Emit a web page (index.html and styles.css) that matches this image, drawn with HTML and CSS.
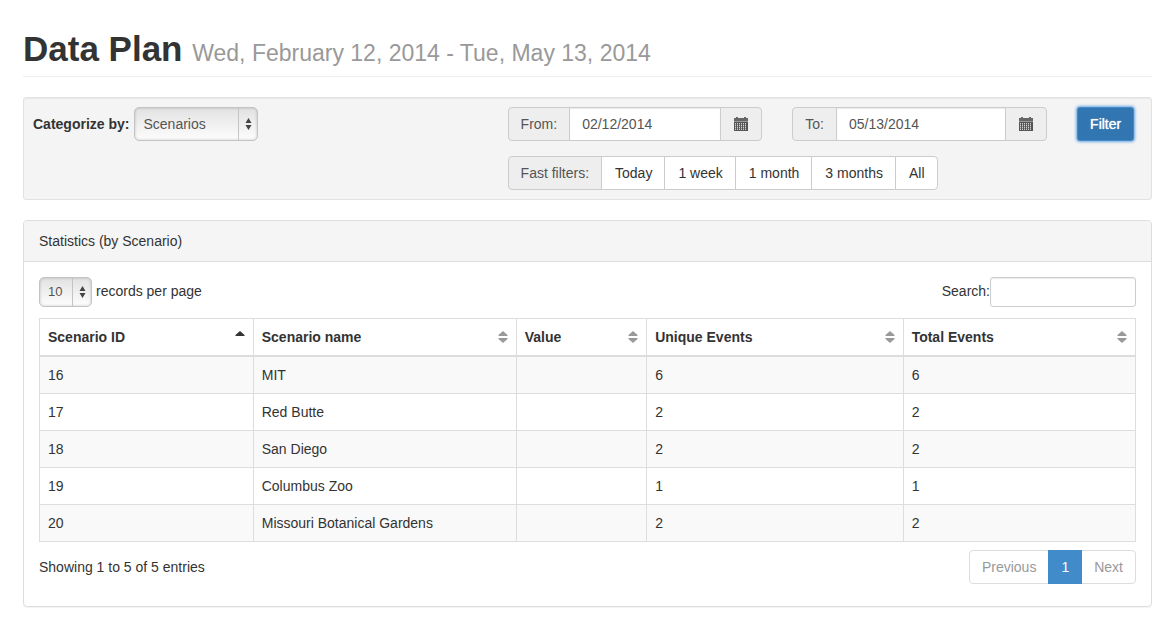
FILE: index.html
```html
<!DOCTYPE html>
<html lang="en">
<head>
<meta charset="utf-8">
<meta name="viewport" content="width=device-width, initial-scale=1">
<title>Data Plan</title>
<link rel="stylesheet" href="styles.css">
</head>
<body>
<svg class="sprite" aria-hidden="true">
  <symbol id="calendar" viewBox="0 0 16 16">
    <path d="M1 2h2V1h2v1h6V1h2v1h2v3H1z" fill="#666"/>
    <path d="M1 5h14v1H1z" fill="#999"/>
    <path d="M1 6h14v9H1z" fill="#555"/>
    <path d="M2 7.500h12M2 9.500h12M2 11.500h12M2 13.500h12" stroke="#eee" stroke-width="1" stroke-dasharray="1 1" opacity=".8"/>
    <path d="M2 8.500h12M2 10.500h12M2 12.500h12" stroke="#eee" stroke-width="1" stroke-dasharray="1 1" opacity=".35"/>
  </symbol>
  <symbol id="updown" viewBox="0 0 7 12">
    <path d="M3.500 0L6.500 5h-6zM3.500 12L.5 7h6z" fill="#444"/>
  </symbol>
  <symbol id="sort" viewBox="0 0 10 12">
    <path d="M5 0l4.500 4v1h-9V4zM5 12L.5 8V7h9v1z" fill="#999"/>
  </symbol>
  <symbol id="sort-asc" viewBox="0 0 10 12">
    <path d="M5 0l4.500 4v1h-9V4z" fill="#333"/>
  </symbol>
</svg>
<main class="page">
  <header class="page-header">
    <h1>Data Plan <small>Wed, February 12, 2014 - Tue, May 13, 2014</small></h1>
  </header>

  <form class="well">
    <div class="categorize">
      <label for="category">Categorize by:</label>
      <span class="select select-lg">
        <select id="category"><option>Scenarios</option></select>
        <svg class="select-arrows"><use href="#updown"/></svg>
      </span>
    </div>
    <div class="input-group from">
      <label class="addon" for="from">From:</label>
      <input type="text" id="from" value="02/12/2014">
      <span class="addon"><svg class="icon"><use href="#calendar"/></svg></span>
    </div>
    <div class="input-group to">
      <label class="addon" for="to">To:</label>
      <input type="text" id="to" value="05/13/2014">
      <span class="addon"><svg class="icon"><use href="#calendar"/></svg></span>
    </div>
    <button type="button" class="filter">Filter</button>
    <div class="input-group fast">
      <span class="addon">Fast filters:</span>
      <button type="button">Today</button>
      <button type="button">1 week</button>
      <button type="button">1 month</button>
      <button type="button">3 months</button>
      <button type="button">All</button>
    </div>
  </form>

  <section class="panel">
    <h2 class="panel-heading">Statistics (by Scenario)</h2>
    <div class="panel-body">
      <div class="toolbar">
        <div class="length">
          <span class="select select-sm">
            <select id="length"><option>10</option></select>
            <svg class="select-arrows"><use href="#updown"/></svg>
          </span>
          <label for="length">records per page</label>
        </div>
        <div class="search">
          <label for="search">Search:</label>
          <input type="text" id="search">
        </div>
      </div>
      <table class="table">
        <colgroup>
          <col class="col-id"><col class="col-name"><col class="col-value"><col class="col-unique"><col class="col-total">
        </colgroup>
        <thead>
          <tr>
            <th><div class="th">Scenario ID<svg class="sort"><use href="#sort-asc"/></svg></div></th>
            <th><div class="th">Scenario name<svg class="sort"><use href="#sort"/></svg></div></th>
            <th><div class="th">Value<svg class="sort"><use href="#sort"/></svg></div></th>
            <th><div class="th">Unique Events<svg class="sort"><use href="#sort"/></svg></div></th>
            <th><div class="th">Total Events<svg class="sort"><use href="#sort"/></svg></div></th>
          </tr>
        </thead>
        <tbody>
          <tr><td>16</td><td>MIT</td><td></td><td>6</td><td>6</td></tr>
          <tr><td>17</td><td>Red Butte</td><td></td><td>2</td><td>2</td></tr>
          <tr><td>18</td><td>San Diego</td><td></td><td>2</td><td>2</td></tr>
          <tr><td>19</td><td>Columbus Zoo</td><td></td><td>1</td><td>1</td></tr>
          <tr><td>20</td><td>Missouri Botanical Gardens</td><td></td><td>2</td><td>2</td></tr>
        </tbody>
      </table>
      <div class="table-footer">
        <p>Showing 1 to 5 of 5 entries</p>
        <nav class="pagination" aria-label="Pages">
          <button type="button" disabled>Previous</button>
          <button type="button" class="active">1</button>
          <button type="button" disabled>Next</button>
        </nav>
      </div>
    </div>
  </section>
</main>
</body>
</html>
```
FILE: styles.css
```css
* { box-sizing: border-box; }

body {
  margin: 0;
  background: #fff;
  color: #333;
  font: 14px/20px "Liberation Sans", Arial, sans-serif;
}

input, select, button { font: inherit; margin: 0; }

.sprite { display: none; }

.page { padding: 29px 22px 20px 23px; }

.page-header {
  padding-bottom: 7px;
  margin-bottom: 20px;
  border-bottom: 1px solid #eee;
}

h1 {
  margin: 0;
  font-size: 35px;
  line-height: 40px;
  font-weight: bold;
}

h1 small {
  font-size: 23px;
  line-height: 24px;
  font-weight: normal;
  color: #999;
}

.well {
  display: grid;
  grid-template-columns: repeat(12, minmax(0, 1fr));
  gap: 15px 30px;
  padding: 9px;
  margin-bottom: 20px;
  background: #f4f4f4;
  border: 1px solid #e2e2e2;
  border-radius: 3px;
  box-shadow: inset 0 1px 1px rgba(0, 0, 0, .05);
}

.categorize {
  grid-column: span 5;
  display: flex;
  align-items: center;
  gap: 5px;
  font-weight: bold;
}

.from, .to { grid-column: span 3; }
.fast { grid-column: 6 / -1; }

.select {
  display: inline-flex;
  position: relative;
  font-weight: normal;
}

.select select {
  appearance: none;
  width: 100%;
  border: 1px solid #c4c4c4;
  border-radius: 5px;
  background: linear-gradient(#e2e2e2, #fdfdfd);
  box-shadow: inset 0 0 3px rgba(0, 0, 0, .2);
  color: #555;
}

.select-lg { width: 124px; height: 34px; }
.select-lg select { padding: 0 8px; }
.select-sm { width: 53px; height: 30px; }
.select-sm select { padding: 0 8px; font-size: 13px; }

.select-arrows {
  position: absolute;
  top: 1px;
  right: 1px;
  width: 19px;
  height: calc(100% - 2px);
  padding: 10px 5px 10px 6px;
  border-left: 1px solid #c4c4c4;
  pointer-events: none;
}

.select-sm .select-arrows { padding: 8px 5px 8px 6px; }

.input-group { display: flex; height: 34px; }

.input-group > * {
  border: 1px solid #ccc;
  border-radius: 0;
}

.input-group > * + * { margin-left: -1px; }

.input-group > :first-child { border-radius: 4px 0 0 4px; }
.input-group > :last-child { border-radius: 0 4px 4px 0; }

.input-group input {
  flex: 1;
  min-width: 0;
  padding: 0 12px;
  background: #fff;
  color: #555;
  box-shadow: inset 0 1px 1px rgba(0, 0, 0, .08);
}

.input-group button {
  padding: 0 12px 0 13px;
  background: #fff;
  color: #333;
}

.addon {
  display: flex;
  align-items: center;
  padding: 0 12px;
  background: #eee;
  color: #555;
}

.icon { width: 16px; height: 16px; }

.filter {
  justify-self: start;
  height: 34px;
  padding: 0 12px;
  border: 1px solid #428bca;
  border-radius: 3px;
  background: #3276b1;
  color: #fff;
  box-shadow: 0 0 3px 1px #6fa8e0;
  text-shadow: 0 0 1px #fff;
}

.panel {
  border: 1px solid #ddd;
  border-radius: 4px;
  box-shadow: 0 1px 1px rgba(0, 0, 0, .05);
}

.panel-heading {
  margin: 0;
  padding: 10px 15px;
  border-bottom: 1px solid #ddd;
  border-radius: 3px 3px 0 0;
  background: #f5f5f5;
  font-size: 14px;
  font-weight: normal;
}

.panel-body { padding: 15px 15px 22px; }

.toolbar, .table-footer {
  display: flex;
  justify-content: space-between;
}

.toolbar { margin-bottom: 11px; }

.length, .search {
  display: flex;
  line-height: 28px;
}

.length { gap: 4px; }

.search input {
  width: 146px;
  height: 30px;
  padding: 0 10px;
  border: 1px solid #ccc;
  border-radius: 3px;
  box-shadow: inset 0 1px 1px rgba(0, 0, 0, .08);
}

.table {
  width: 100%;
  table-layout: fixed;
  border-collapse: separate;
  border-spacing: 0;
  border: solid #ddd;
  border-width: 1px 0 0 1px;
}

.col-id { width: 19.5%; }
.col-name { width: 24%; }
.col-value { width: 11.9%; }
.col-unique { width: 23.4%; }

.table th, .table td {
  height: 37px;
  padding: 8px;
  border: solid #ddd;
  border-width: 0 1px 1px 0;
  text-align: left;
}

.table th { border-bottom-width: 2px; }
.table tbody tr:nth-child(odd) { background: #f9f9f9; }

.th {
  display: flex;
  align-items: center;
  justify-content: space-between;
}

.sort { width: 10px; height: 12px; }

.table-footer {
  align-items: center;
  padding-top: 8px;
}

.table-footer p { margin: 0; }

.pagination { display: flex; height: 34px; }

.pagination button {
  padding: 0 12px;
  border: 1px solid #ddd;
  background: #fff;
  color: #999;
}

.pagination button + button { margin-left: -1px; }
.pagination :first-child { border-radius: 4px 0 0 4px; }
.pagination :last-child { border-radius: 0 4px 4px 0; }

.pagination .active {
  position: relative;
  border-color: #428bca;
  background: #428bca;
  color: #fff;
}
```
